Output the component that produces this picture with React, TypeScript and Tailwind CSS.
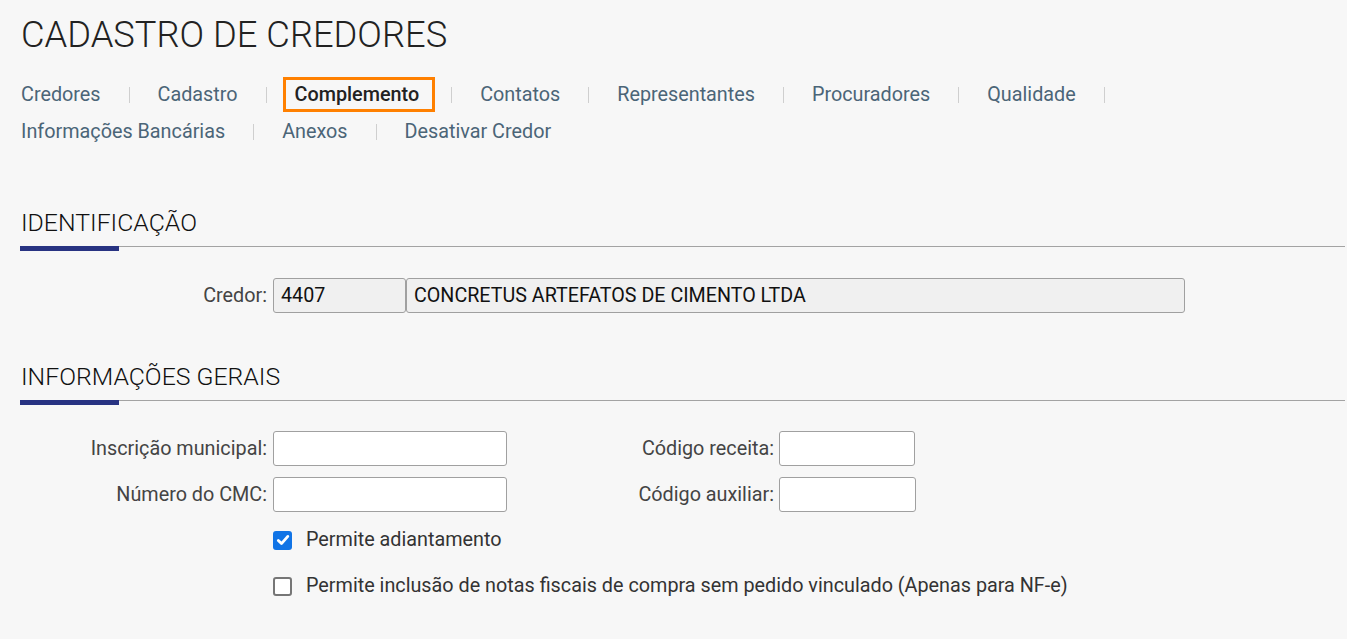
import React from 'react';

const tabs = [
    'Credores',
    'Cadastro',
    'Complemento',
    'Contatos',
    'Representantes',
    'Procuradores',
    'Qualidade',
    'Informações Bancárias',
    'Anexos',
    'Desativar Credor',
];

function SectionTitle({ children, className }: { children: React.ReactNode; className: string }) {
    return (
        <div className={className}>
            <h2 className="text-[24.8px] leading-[30px] text-[#111] font-light px-px">{children}</h2>
            <div className="relative mt-[8px] h-px bg-[#a3a3a3]">
                <div className="absolute left-0 top-0 h-[5px] w-[99px] bg-[#283382]" />
            </div>
        </div>
    );
}

function TextInput({ w, value, disabled }: { w: string; value?: string; disabled?: boolean }) {
    return (
        <div
            className={`${w} h-[35px] rounded-[3px] border border-[#a0a0a0] ${disabled ? 'bg-[#f0f0f0]' : 'bg-white'} flex items-center px-[7px] text-[19.7px] text-[#111]`}
        >
            {value}
        </div>
    );
}

function Checkbox({ checked, label }: { checked?: boolean; label: string }) {
    return (
        <div className="flex items-center leading-[24px]">
            {checked ? (
                <span className="w-[19px] h-[19px] rounded-[3px] bg-[#1174e6] flex items-center justify-center">
                    <svg width="14" height="14" viewBox="0 0 14 14" fill="none">
                        <path d="M2.3 7.4 L5.5 10.6 L11.8 3.4" stroke="white" strokeWidth="2.8" strokeLinecap="round" strokeLinejoin="round" />
                    </svg>
                </span>
            ) : (
                <span className="w-[19px] h-[19px] rounded-[3px] border-2 border-[#767676] bg-white" />
            )}
            <span className="ml-[14px] text-[19.8px] text-[#333]">{label}</span>
        </div>
    );
}

export default function App() {
    return (
        <div className="min-h-screen bg-[#f7f7f7] font-['Roboto',sans-serif] pt-[14px] pb-10">
            <div className="pl-[20px] pr-[2px]">
                <h1 className="text-[36.3px] leading-[42px] font-light text-[#222] px-px">CADASTRO DE CREDORES</h1>

                <nav className="mt-[21px] -ml-[11px] flex flex-wrap gap-y-[2px]">
                    {tabs.map((t, i) => (
                        <div key={t} className="flex items-center">
                            <a
                                className={`px-[9px] py-[4px] leading-[21px] text-[19.8px] border-[3px] ${
                                    t === 'Complemento'
                                        ? 'border-[#ff8000] font-medium text-[#222] pr-[13px]'
                                        : 'border-transparent text-[#4b6577]'
                                }`}
                            >
                                {t}
                            </a>
                            {i < tabs.length - 1 && <span className="mx-[16px] h-[16px] w-px bg-[#cfcfcf]" />}
                        </div>
                    ))}
                </nav>

                <SectionTitle className="mt-[59px]">IDENTIFICAÇÃO</SectionTitle>

                <div className="mt-[31px] flex items-center">
                    <label className="w-[247px] text-right text-[19.8px] text-[#444]">Credor:</label>
                    <div className="ml-[6px] flex">
                        <TextInput w="w-[133px]" value="4407" disabled />
                        <TextInput w="w-[779px]" value="CONCRETUS ARTEFATOS DE CIMENTO LTDA" disabled />
                    </div>
                </div>

                <SectionTitle className="mt-[49px]">INFORMAÇÕES GERAIS</SectionTitle>

                <div className="mt-[30px] flex flex-col gap-[11px]">
                    <div className="flex items-center">
                        <label className="w-[247px] text-right text-[19.8px] text-[#444]">Inscrição municipal:</label>
                        <div className="ml-[6px]">
                            <TextInput w="w-[234px]" />
                        </div>
                        <label className="w-[267px] text-right text-[19.8px] text-[#444]">Código receita:</label>
                        <div className="ml-[5px]">
                            <TextInput w="w-[136px]" />
                        </div>
                    </div>
                    <div className="flex items-center">
                        <label className="w-[247px] text-right text-[19.8px] text-[#444]">Número do CMC:</label>
                        <div className="ml-[6px]">
                            <TextInput w="w-[234px]" />
                        </div>
                        <label className="w-[267px] text-right text-[19.8px] text-[#444]">Código auxiliar:</label>
                        <div className="ml-[5px]">
                            <TextInput w="w-[137px]" />
                        </div>
                    </div>
                </div>

                <div className="ml-[253px] mt-[16px] flex flex-col gap-[22px]">
                    <Checkbox checked label="Permite adiantamento" />
                    <Checkbox label="Permite inclusão de notas fiscais de compra sem pedido vinculado (Apenas para NF-e)" />
                </div>
            </div>
        </div>
    );
}
